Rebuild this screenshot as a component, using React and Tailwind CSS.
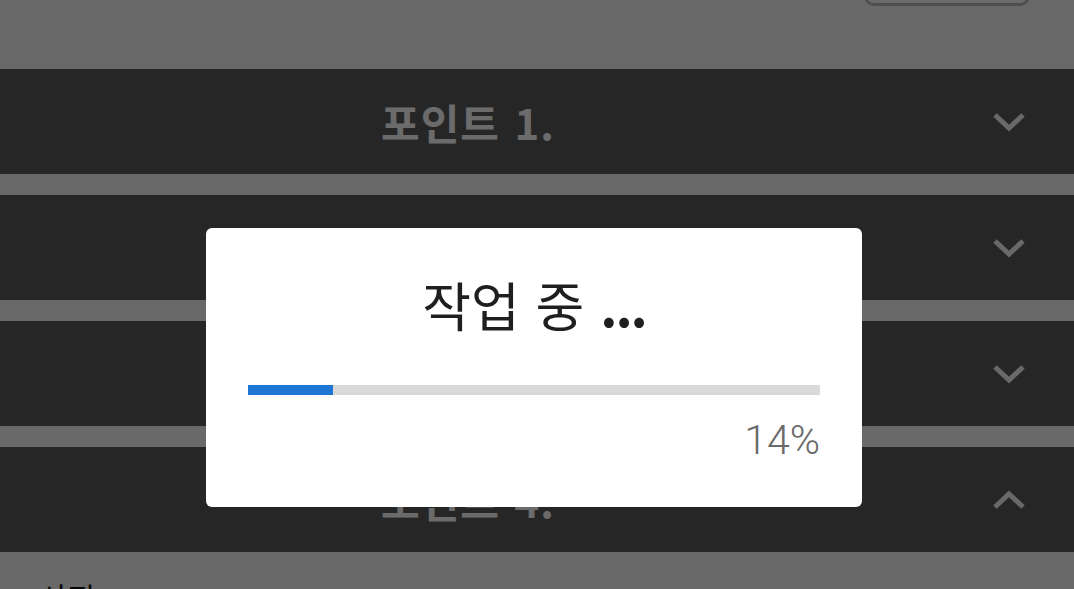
import { useState } from "react";

const KR = { fontFamily: "'Noto Sans CJK KR','Noto Sans',sans-serif" };

function Chevron({ up }) {
    return (
        <svg width="32" height="20" viewBox="0 0 32 20" fill="none">
            <polyline
                points={up ? "2,17 16,4 30,17" : "2,3 16,16 30,3"}
                stroke="currentColor"
                strokeWidth="5"
                strokeLinecap="butt"
                strokeLinejoin="miter"
            />
        </svg>
    );
}

function PointBar({ label, open }) {
    return (
        <div className="flex items-center h-[105px] bg-[#5b5b5b]">
            <div className="flex-1 flex justify-center">
                <span className="text-[42px] leading-[50px] font-bold text-white tracking-[1px] [word-spacing:4px]" style={KR}>
                    {label}
                </span>
            </div>
            <div className="w-[138px] flex justify-center pl-[8px] text-[#fafafa]">
                <Chevron up={open} />
            </div>
        </div>
    );
}

export default function App() {
    const [progress] = useState(14);
    const points = ["포인트 1.", "포인트 2.", "포인트 3.", "포인트 4."];

    return (
        <div className="relative w-[1074px] h-[589px] overflow-hidden bg-[#fbfbfb]" style={KR}>

            {/* ── page behind ─────────────────────────────────── */}
            <div className="h-[69px] flex justify-end pr-[44px]">
                <div className="w-[166px] h-[46px] -mt-[40px] rounded-[10px] border-[3px] border-[#bdbdbd] bg-white" />
            </div>

            <div className="flex flex-col gap-[21px]">
                {points.map((p, i) => (
                    <PointBar key={p} label={p} open={i === 3} />
                ))}
            </div>

            <div className="pl-[40px] pt-[22px] text-[30px] text-[#111]">사진</div>

            {/* ── dim overlay + progress dialog ────────────────── */}
            <div className="absolute inset-0 bg-black/[0.58] flex justify-center pt-[228px] pr-[6px]">
                <div className="w-[656px] h-[279px] bg-white rounded-[6px] px-[42px] flex flex-col">
                    <div className="text-center text-[53px] leading-[60px] text-[#1f1f1f] pt-[46px] [word-spacing:4px]" style={KR}>
                        작업 중 <span className="font-bold tracking-[-2px]">...</span>
                    </div>
                    <div className="mt-[51px] h-[10px] bg-[#d9d9d9]">
                        <div className="h-full bg-[#1d76d1]" style={{ width: `${progress + 0.9}%` }} />
                    </div>
                    <div
                        className="text-right text-[41px] leading-[48px] mt-[21px] text-[#6a6a6a] font-light"
                        style={{ fontFamily: "Roboto, 'Noto Sans', sans-serif" }}
                    >
                        {progress}%
                    </div>
                </div>
            </div>
        </div>
    );
}
